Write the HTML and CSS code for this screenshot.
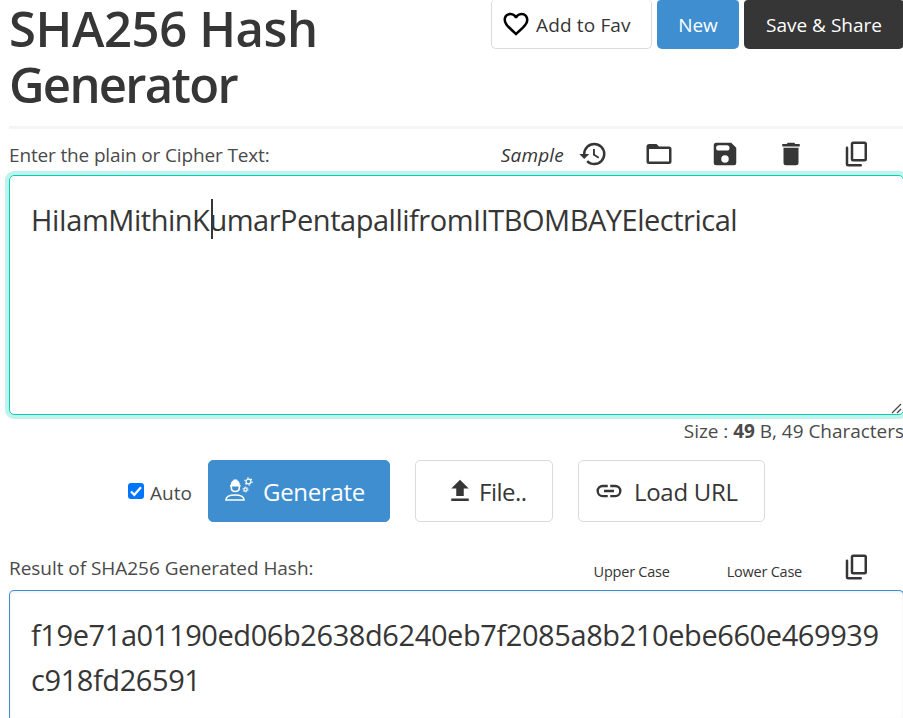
FILE: index.html
```html
<!DOCTYPE html>
<html lang="en">
<head>
<meta charset="utf-8">
<title>SHA256 Hash Generator</title>
<link rel="stylesheet" href="styles.css">
</head>
<body>
<main class="page">
  <header class="header">
    <h1 class="title"><span class="t1">SHA256 Hash</span><br><span class="t2">Generator</span></h1>
    <div class="actions">
      <button class="btn fav"><svg class="heart" viewBox="0 0 24 24"><path d="M12.1 18.55l-.1.1-.11-.1C7.14 14.24 4 11.39 4 8.5 4 6.5 5.5 5 7.5 5c1.54 0 3.04 1 3.57 2.36h1.86C13.46 6 14.96 5 16.5 5c2 0 3.5 1.5 3.5 3.5 0 2.89-3.14 5.74-7.9 10.05M16.5 3c-1.74 0-3.41.81-4.5 2.08C10.91 3.81 9.24 3 7.5 3 4.42 3 2 5.41 2 8.5c0 3.77 3.4 6.86 8.55 11.53L12 21.35l1.45-1.32C18.6 15.36 22 12.27 22 8.5 22 5.41 19.58 3 16.5 3z"/></svg><span>Add to Fav</span></button>
      <button class="btn new"><span>New</span></button>
      <button class="btn save"><span>Save &amp; Share</span></button>
    </div>
  </header>
  <div class="toolbar">
    <label class="enter">Enter the plain or Cipher Text:</label>
    <div class="tools">
      <em class="sample">Sample</em>
      <svg class="icon" viewBox="0 0 24 24"><path d="M13.5 8H12v5l4.28 2.54.72-1.21-3.5-2.08V8M13 3a9 9 0 0 0-9 9H1l3.96 4.03L9 12H6a7 7 0 0 1 7-7 7 7 0 0 1 7 7 7 7 0 0 1-7 7c-1.93 0-3.68-.79-4.94-2.06l-1.42 1.42A8.9 8.9 0 0 0 13 21a9 9 0 0 0 9-9 9 9 0 0 0-9-9"/></svg>
      <svg class="icon" viewBox="0 0 24 24"><path d="M20 18H4V8h16m0-2h-8l-2-2H4c-1.11 0-2 .89-2 2v12a2 2 0 0 0 2 2h16a2 2 0 0 0 2-2V8a2 2 0 0 0-2-2z"/></svg>
      <svg class="icon" viewBox="0 0 24 24"><path fill-rule="evenodd" d="M5 3h12l4 4v12a2 2 0 0 1-2 2H5a2 2 0 0 1-2-2V5a2 2 0 0 1 2-2zM7 5a2 2 0 0 0 0 4.2h6.5a2 2 0 0 0 0-4.200zM12 13a3 3 0 1 0 0 6 3 3 0 0 0 0-6z"/></svg>
      <svg class="icon" viewBox="0 0 24 24"><path d="M19 4h-3.500l-1-1h-5l-1 1H5v2h14M6 19a2 2 0 0 0 2 2h8a2 2 0 0 0 2-2V7H6v12z"/></svg>
      <svg class="icon copy" viewBox="0 0 24 24"><rect x="8" y="3" width="11" height="14" rx="1"/><path d="M4 7v13q0 1 1 1h10"/></svg>
    </div>
  </div>
  <div class="input"><span class="plain">HiIamMithinKumarPentapallifromIITBOMBAYElectrical</span><i class="caret"></i>
    <svg class="grip" viewBox="0 0 11 11"><path d="M1 10L10 1M6 10l4-4"/></svg>
  </div>
  <p class="size"><span>Size : <b>49</b> B, 49 Characters</span></p>
  <div class="controls">
    <label class="auto"><span class="check"><svg viewBox="0 0 16 16"><path d="M3 8.500l3.300 3.300L13 4.200"/></svg></span><span class="autotext">Auto</span></label>
    <button class="big generate"><svg class="worker" viewBox="0 0 30 26"><path d="M2 23q0-5 9-5t9 5z"/><path d="M7.300 9v1.500q0 4 4 4t4-4V9"/><path class="solid" d="M6 9.500V7.700h.8q0-3.500 2.700-4.500v-.7h3.600v.7q2.700 1 2.700 4.500h.8v1.800z"/><circle cx="24.500" cy="4.500" r="2.400"/><circle class="teeth" cx="24.500" cy="4.500" r="3.600"/><circle cx="21.500" cy="12.500" r="1.600"/><circle class="teeth small" cx="21.500" cy="12.500" r="2.600"/></svg><span>Generate</span></button>
    <button class="big file"><svg class="icon" viewBox="0 0 24 24"><path d="M9 16v-6H5l7-7 7 7h-4v6H9zM5 20v-2h14v2H5z"/></svg><span>File..</span></button>
    <button class="big url"><svg class="icon" viewBox="0 0 24 24"><path d="M3.900 12A3.100 3.100 0 0 1 7 8.900h4V7H7a5 5 0 0 0 0 10h4v-1.900H7A3.100 3.100 0 0 1 3.900 12M8 13h8v-2H8v2m9-6h-4v1.900h4a3.100 3.100 0 0 1 0 6.200h-4V17h4a5 5 0 0 0 0-10z"/></svg><span>Load URL</span></button>
  </div>
  <div class="resultbar">
    <label class="resultlabel">Result of SHA256 Generated Hash:</label>
    <div class="cases"><span class="upper">Upper Case</span><span class="lower">Lower Case</span><svg class="icon copy" viewBox="0 0 24 24"><rect x="8" y="3" width="11" height="14" rx="1"/><path d="M4 7v13q0 1 1 1h10"/></svg></div>
  </div>
  <div class="output"><span class="hash">f19e71a01190ed06b2638d6240eb7f2085a8b210ebe660e469939</span><br><span class="hash">c918fd26591</span></div>
</main>
</body>
</html>
```
FILE: styles.css
```css
* { box-sizing: border-box; }
html, body { margin: 0; height: 718px; overflow: hidden; background: #fff; }
body { font-family: "Open Sans", "Noto Sans", sans-serif; font-size: 19px; color: #4a4a4a; }
button { font-family: inherit; margin: 0; padding: 0; border: 0; display: flex; align-items: center; white-space: nowrap; }
svg { display: block; flex: none; }
.page { width: 895px; margin-left: 9px; white-space: nowrap; }
.header { display: flex; justify-content: space-between; align-items: flex-start; height: 129px; border-bottom: 3px solid #f5f5f5; }
.title { margin: 0; font-size: 49px; line-height: 56px; font-weight: 600; color: #363636; }
.t1 { letter-spacing: -.4px; }
.t2 { letter-spacing: -1.7px; }
.actions { display: flex; gap: 5px; height: 49px; }
.btn { height: 49px; border-radius: 4px 4px 5px 5px; font-size: 19px; color: #fff; justify-content: center; padding-top: 1px; }
.fav { width: 161px; border: 1px solid #dbdbdb; border-top: 0; background: #fff; color: #363636; gap: 5px; justify-content: flex-start; padding-left: 9px; letter-spacing: .15px; }
.heart { width: 30px; height: 30px; fill: #000; margin-top: -2px; }
.new { width: 82px; background: #3e8ed0; font-weight: 500; }
.save { width: 160px; background: #363636; }
.toolbar { display: flex; justify-content: space-between; align-items: center; height: 46px; padding-top: 4px; }
.enter { letter-spacing: -.15px; padding-top: 1px; }
.tools { display: flex; align-items: center; gap: 36px; padding-right: 32px; }
.sample { color: #363636; margin-right: -22px; padding-top: 1px; letter-spacing: .2px; }
.icon { width: 30px; height: 30px; fill: #363636; }
.copy { fill: none; stroke: #363636; stroke-width: 2; stroke-linecap: round; }
.input { position: relative; height: 240px; border: 1px solid #00d1b2; border-radius: 5px; box-shadow: 0 0 0 4px rgba(0,209,178,.25); padding: 21px 22px; font-size: 29px; line-height: 45px; color: #363636; }
.plain { letter-spacing: -.48px; font-weight: 380; margin-left: -1px; }
.caret { position: absolute; left: 201px; top: 23px; width: 2px; height: 40px; background: #363636; }
.grip { position: absolute; right: 1px; bottom: 0; width: 11px; height: 11px; fill: none; stroke: #444; stroke-width: 1.2; }
.size { margin: 0; height: 45px; line-height: 33px; text-align: right; letter-spacing: -.03px; }
.controls { display: flex; height: 62px; padding-left: 119px; }
.auto { display: flex; align-items: center; gap: 6px; width: 80px; padding-top: 3px; }
.check { width: 16px; height: 16px; border-radius: 3px; background: #0075ff; margin-top: -4px; }
.check svg { width: 16px; height: 16px; fill: none; stroke: #fff; stroke-width: 2.2; }
.big { height: 62px; border-radius: 5px; border: 1px solid #dbdbdb; background: #fff; color: #363636; font-size: 24px; letter-spacing: -.3px; }
.generate { width: 182px; background: #3e8ed0; border-color: #3e8ed0; color: #fff; padding-left: 15px; gap: 9px; }
.worker { width: 30px; height: 26px; fill: none; stroke: #fff; stroke-width: 1.6; margin-top: -2px; }
.worker .solid { fill: #fff; stroke: none; }
.worker circle { stroke-width: 1.2; }
.worker .teeth { stroke-width: 1.2; stroke-dasharray: 1.6 2.17; }
.worker .small { stroke-width: 1; stroke-dasharray: 1.2 1.523; }
.file { width: 138px; margin-left: 25px; padding-left: 29px; gap: 4px; letter-spacing: -.5px; }
.url { width: 187px; margin-left: 25px; padding-left: 15px; gap: 10px; }
.resultbar { display: flex; justify-content: space-between; height: 68px; padding-top: 31px; line-height: 30px; }
.cases { display: flex; font-size: 14.5px; letter-spacing: -.23px; color: #363636; padding-right: 32px; }
.cases span { padding-top: 4px; }
.cases .icon { margin-left: 40px; margin-top: -1px; }
.lower { margin-left: 57px; }
.resultlabel { letter-spacing: -.04px; }
.output { height: 128px; border: 1px solid #3e8ed0; border-bottom: 0; border-radius: 5px 5px 0 0; padding: 21px 21px 0; font-size: 29px; line-height: 45px; color: #363636; box-shadow: inset 0 1px 3px rgba(10,10,10,.08); }
.hash { letter-spacing: -.41px; }
.big svg { margin-top: -2px; }
.big .icon { margin-top: -1px; }
```
